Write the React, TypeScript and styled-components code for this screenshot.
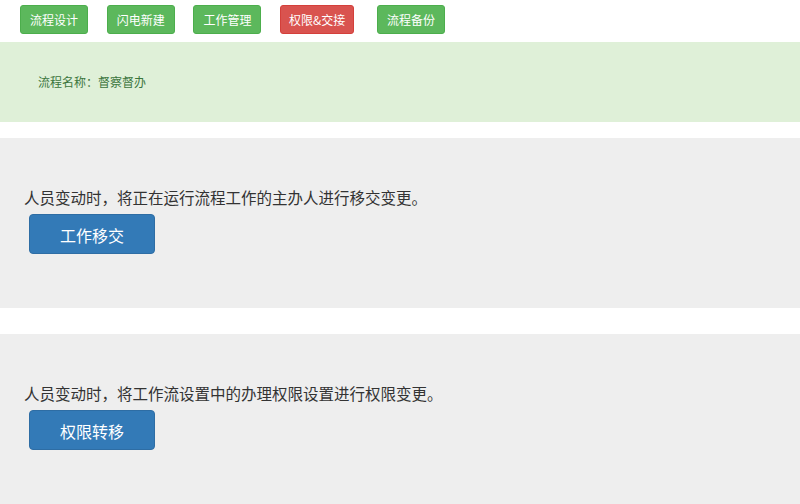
import styled, { createGlobalStyle } from "styled-components";

const GlobalStyle = createGlobalStyle`
    body {
        margin: 0;
        background: #fff;
        font-family: "Noto Sans CJK SC", "Noto Sans", sans-serif;
        color: #333;
    }
`

const tabs = [
    {label: "流程设计", tone: "green"},
    {label: "闪电新建", tone: "green"},
    {label: "工作管理", tone: "green"},
    {label: "权限&交接", tone: "red"},
    {label: "流程备份", tone: "green", wide: true},
];

const panels = [
    {text: "人员变动时，将正在运行流程工作的主办人进行移交变更。", action: "工作移交", gap: 16},
    {text: "人员变动时，将工作流设置中的办理权限设置进行权限变更。", action: "权限转移", gap: 26},
];

export default function App() {
    return (
        <>
            <GlobalStyle/>
            <Toolbar>
                {tabs.map((t) => (
                    <TabButton key={t.label} $tone={t.tone} $wide={!!t.wide}>{t.label}</TabButton>
                ))}
            </Toolbar>

            <Alert>流程名称：督察督办</Alert>

            {panels.map((p) => (
                <Panel key={p.action} $gap={p.gap}>
                    <Lead>{p.text}</Lead>
                    <ActionButton>{p.action}</ActionButton>
                </Panel>
            ))}
        </>
    );
}

const Toolbar = styled.div`
    display: flex;
    align-items: flex-start;
    gap: 18.7px;
    height: 42px;
    padding: 5px 0 0 20px;
    box-sizing: border-box;
`
const TabButton = styled.button<{ $tone: string; $wide: boolean }>`
    height: 29px;
    padding: 0 ${(p) => (p.$tone === "red" ? "8px" : "9px")};
    margin-left: ${(p) => (p.$wide ? "4px" : "0")};
    border: 1px solid ${(p) => (p.$tone === "red" ? "#d43f3a" : "#4cae4c")};
    border-radius: 3px;
    background: ${(p) => (p.$tone === "red" ? "#d9534f" : "#5cb85c")};
    color: #fff;
    font-family: inherit;
    font-size: 12px;
    line-height: 27px;
    cursor: pointer;
`
const Alert = styled.div`
    height: 80px;
    box-sizing: border-box;
    padding: 31px 38px 0;
    background: #dff0d8;
    color: #3c763d;
    font-size: 12px;
    line-height: 17px;
`
const Panel = styled.section<{ $gap: number }>`
    margin-top: ${(p) => p.$gap}px;
    padding: 48px 24px 54px;
    background: #eeeeee;
`
const Lead = styled.p`
    margin: 0 0 6px;
    font-size: 15.5px;
    line-height: 22px;
    color: #333;
`
const ActionButton = styled.button`
    display: block;
    width: 126px;
    height: 40px;
    margin-left: 5px;
    border: 1px solid #2e6da4;
    border-radius: 4px;
    background: #337ab7;
    color: #fff;
    font-family: inherit;
    font-size: 16px;
    line-height: 38px;
    cursor: pointer;
`
